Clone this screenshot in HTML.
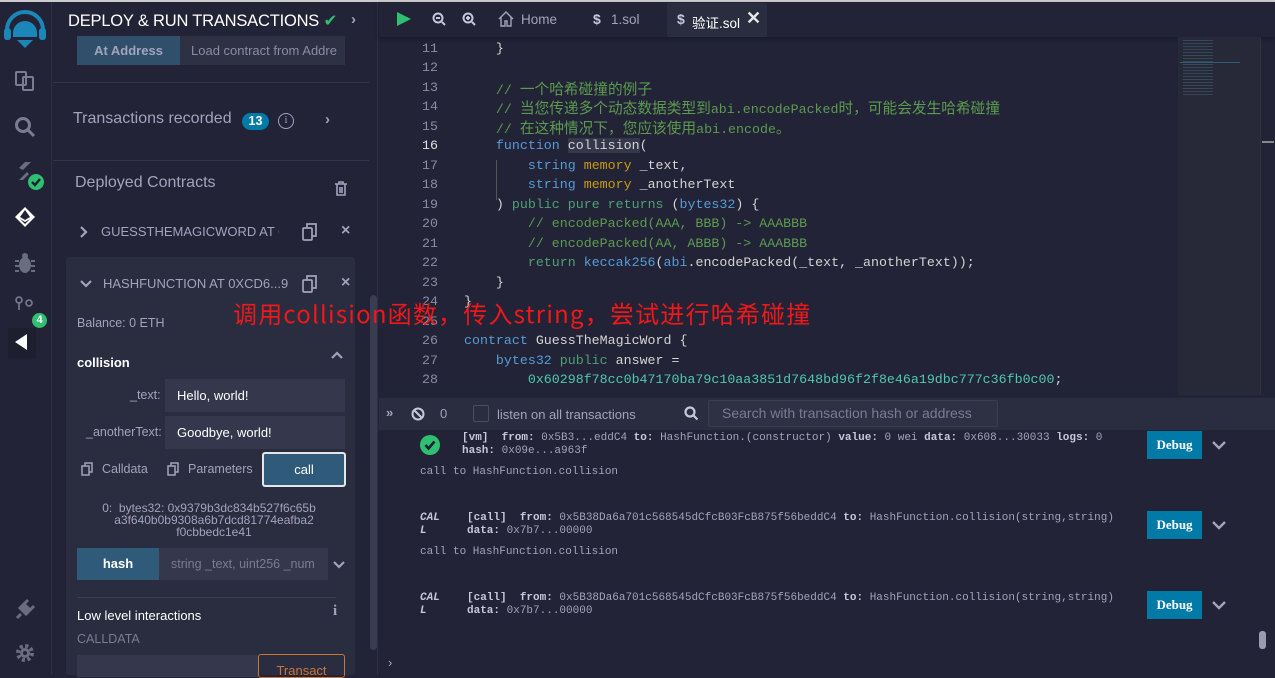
<!DOCTYPE html>
<html><head><meta charset="utf-8"><style>
*{box-sizing:border-box;margin:0;padding:0}
body{width:1275px;height:675px;overflow:hidden;background:#222336;font-family:"Liberation Sans","Noto Sans CJK SC",sans-serif;color:#a2a3bd;position:relative}
.a{position:absolute;white-space:nowrap}
.ln{position:absolute;left:380px;width:58px;text-align:right;font-family:"Liberation Mono",monospace;font-size:13.3px;color:#8a8ca3}
.cl{position:absolute;left:464px;font-family:"Liberation Mono","Noto Sans CJK SC",monospace;font-size:13.3px;color:#d4d4d4;white-space:pre}
.cj{font-size:14.7px;font-family:"Noto Sans CJK SC",sans-serif}
.cm{color:#5c9b4f}.kw{color:#569cd6}.mem{color:#c99a10}.gr{color:#4ea072}.nm{color:#4ec9b0}.ty{color:#569cd6}
.tl{font-family:"Liberation Mono","Noto Sans CJK SC",monospace;font-size:11px;color:#a2a3bd;position:absolute;white-space:nowrap}
.tl b{color:#c6c7da}
.dbg{position:absolute;left:1147px;width:55px;height:28px;background:#007aa6;color:#fff;font-family:"Liberation Serif",serif;font-weight:bold;font-size:13px;text-align:center;line-height:28px}
</style></head><body>
<div class="a" style="left:0;top:0;width:1275px;height:2px;background:#ccc"></div>
<div class="a" style="left:0;top:2px;width:52px;height:673px;background:#222336;border-right:1px solid #2d2f45"></div>
<svg class="a" style="left:3px;top:8px" width="44" height="42" viewBox="0 0 44 42"><path d="M4 22 a18 18 0 0 1 36 0" fill="none" stroke="#1a87b8" stroke-width="4"/><rect x="1" y="20" width="7" height="12" rx="3" fill="#1a87b8"/><rect x="36" y="20" width="7" height="12" rx="3" fill="#1a87b8"/><path d="M10 25 a12 12 0 0 1 24 0 v4 h-24z M14 32 h16 l-8 8z" fill="#1a87b8"/></svg>
<svg class="a" style="left:14px;top:70px" width="22" height="22" viewBox="0 0 22 22" fill="none" stroke="#7a7c92" stroke-width="2"><rect x="2" y="2" width="10" height="13" rx="1"/><rect x="9" y="7" width="10" height="13" rx="1"/></svg>
<svg class="a" style="left:14px;top:116px" width="22" height="22" viewBox="0 0 22 22" fill="none" stroke="#7a7c92" stroke-width="3"><circle cx="9" cy="9" r="6.5"/><path d="M14 14l6 6"/></svg>
<svg class="a" style="left:15px;top:160px" width="32" height="32" viewBox="0 0 32 32"><path d="M4 8 l6-6 h6 l-8 8z M14 14 l-6 6 h-4 l8-8z" fill="#6a6c80"/><circle cx="21" cy="22" r="8" fill="#2fbf71"/><path d="M17 22l3 3 5-6" stroke="#1e2033" stroke-width="2.4" fill="none"/></svg>
<svg class="a" style="left:13px;top:205px" width="24" height="24" viewBox="0 0 24 24"><path d="M2 12 L12 2 L22 12 L12 22Z" fill="#fff"/><path d="M12 5 L7 12 L12 15 L17 12Z M7 14 L12 19 L17 14 L12 17Z" fill="#222336"/></svg>
<svg class="a" style="left:15px;top:252px" width="20" height="22" viewBox="0 0 20 22" fill="#6a6c80"><ellipse cx="10" cy="13" rx="6" ry="8"/><path d="M0 9h4M0 14h4M0 19h4M16 9h4M16 14h4M16 19h4" stroke="#6a6c80" stroke-width="2"/><circle cx="10" cy="4" r="3"/></svg>
<svg class="a" style="left:15px;top:296px" width="20" height="14" viewBox="0 0 20 14" fill="none" stroke="#7a7c92" stroke-width="1.6"><circle cx="4" cy="4" r="3"/><circle cx="14" cy="7" r="3"/><path d="M4 7v7"/></svg>
<div class="a" style="left:32px;top:313px;width:15px;height:15px;border-radius:8px;background:#2fbf71;color:#fff;font-size:11px;font-weight:bold;text-align:center;line-height:15px">4</div>
<div class="a" style="left:8px;top:328px;width:28px;height:30px;background:#1d1e2e"></div>
<svg class="a" style="left:14px;top:333px" width="14" height="18"><path d="M13 1 L1 9 L13 17Z" fill="#fff"/></svg>
<svg class="a" style="left:14px;top:598px" width="22" height="22" viewBox="0 0 22 22"><path d="M3 20l4-4 M6 10l6 6 4-4-6-6z M11 5l3-3 M17 11l3-3" stroke="#6a6c80" stroke-width="3" fill="#6a6c80"/></svg>
<svg class="a" style="left:15px;top:643px" width="20" height="20" viewBox="0 0 20 20"><circle cx="10" cy="10" r="7" fill="none" stroke="#6a6c80" stroke-width="4" stroke-dasharray="3 2.5"/><circle cx="10" cy="10" r="5" fill="#6a6c80"/><circle cx="10" cy="10" r="2" fill="#222336"/></svg>

<div class="a" style="left:53px;top:2px;width:325px;height:673px;background:#222336;border-right:1px solid #2d2f45"></div>
<div class="a" style="left:68px;top:11px;font-size:16.5px;color:#fff;letter-spacing:-0.2px">DEPLOY &amp; RUN TRANSACTIONS <span style="color:#2fbf71">✔</span></div>
<div class="a" style="left:351px;top:11px;color:#a2a3bd;font-size:15px;font-weight:bold">›</div>
<div class="a" style="left:77px;top:36px;width:103px;height:29px;background:#2f4f6a;color:#a2a3bd;font-size:13px;font-weight:bold;text-align:center;line-height:29px">At Address</div>
<div class="a" style="left:180px;top:36px;width:165px;height:29px;background:#2e3044;color:#8a8ca3;font-size:13px;line-height:29px;padding-left:11px;overflow:hidden">Load contract from Addre</div>
<div class="a" style="left:53px;top:82px;width:316px;height:1px;background:#33354c"></div>
<div class="a" style="left:73px;top:110px;font-size:16px;color:#a2a3bd">Transactions recorded</div>
<div class="a" style="left:242px;top:113px;width:27px;height:17px;border-radius:9px;background:#007aa6;color:#fff;font-size:12.5px;font-weight:bold;text-align:center;line-height:17px">13</div>
<div class="a" style="left:278px;top:113px;width:16px;height:16px;border-radius:50%;border:1.5px solid #a2a3bd;font-size:11px;text-align:center;line-height:13px;font-family:'Liberation Serif',serif">i</div>
<div class="a" style="left:325px;top:111px;font-size:15px;font-weight:bold">›</div>
<div class="a" style="left:53px;top:160px;width:316px;height:1px;background:#33354c"></div>
<div class="a" style="left:75px;top:174px;font-size:16px;color:#a2a3bd">Deployed Contracts</div>
<svg class="a" style="left:334px;top:181px" width="14" height="15" viewBox="0 0 14 15" fill="none" stroke="#a2a3bd" stroke-width="1.6"><path d="M1 3h12M5 3V1h4v2M3 3v11h8V3M6 6v6M8 6v6"/></svg>
<svg class="a" style="left:80px;top:226px" width="8" height="12"><path d="M1 1l5 5-5 5" stroke="#a2a3bd" stroke-width="2.2" fill="none"/></svg>
<div class="a" style="left:101px;top:224px;font-size:13px;width:178px;overflow:hidden">GUESSTHEMAGICWORD AT 0X</div>
<svg class="a" style="left:302px;top:223px" width="16" height="18" viewBox="0 0 16 18" fill="none" stroke="#a2a3bd" stroke-width="1.7"><rect x="1" y="5" width="9" height="12" rx="1"/><path d="M5 5V1h9v12h-4"/></svg>
<div class="a" style="left:341px;top:222px;font-size:16px;font-weight:bold">×</div>
<div class="a" style="left:66px;top:257px;width:289px;height:418px;background:#2a2c3f;border-radius:3px"></div>
<svg class="a" style="left:80px;top:280px" width="12" height="8"><path d="M1 1l5 5 5-5" stroke="#a2a3bd" stroke-width="2.2" fill="none"/></svg>
<div class="a" style="left:103px;top:276px;font-size:13px">HASHFUNCTION AT 0XCD6...9</div>
<svg class="a" style="left:302px;top:275px" width="16" height="18" viewBox="0 0 16 18" fill="none" stroke="#a2a3bd" stroke-width="1.7"><rect x="1" y="5" width="9" height="12" rx="1"/><path d="M5 5V1h9v12h-4"/></svg>
<div class="a" style="left:341px;top:274px;font-size:16px;font-weight:bold">×</div>
<div class="a" style="left:370px;top:295px;width:7px;height:355px;border-radius:4px;background:#3a3c52"></div>
<div class="a" style="left:77px;top:316px;font-size:12.5px">Balance: 0 ETH</div>
<div class="a" style="left:77px;top:355px;font-size:13px;font-weight:bold;color:#fff">collision</div>
<svg class="a" style="left:331px;top:351px" width="12" height="8"><path d="M1 7l5-5 5 5" stroke="#a2a3bd" stroke-width="2.2" fill="none"/></svg>
<div class="a" style="left:130px;top:388px;font-size:12.5px">_text:</div>
<div class="a" style="left:165px;top:379px;width:180px;height:33px;background:#35374d;color:#fff;font-size:13px;line-height:33px;padding-left:12px">Hello, world!</div>
<div class="a" style="left:86px;top:425px;font-size:12.5px">_anotherText:</div>
<div class="a" style="left:165px;top:416px;width:180px;height:33px;background:#35374d;color:#fff;font-size:13px;line-height:33px;padding-left:12px">Goodbye, world!</div>
<svg class="a" style="left:81px;top:462px" width="12" height="14" viewBox="0 0 12 14" fill="none" stroke="#a2a3bd" stroke-width="1.5"><rect x="1" y="4" width="7" height="9"/><path d="M4 4V1h7v9H8"/></svg>
<div class="a" style="left:102px;top:462px;font-size:12.5px">Calldata</div>
<svg class="a" style="left:167px;top:462px" width="12" height="14" viewBox="0 0 12 14" fill="none" stroke="#a2a3bd" stroke-width="1.5"><rect x="1" y="4" width="7" height="9"/><path d="M4 4V1h7v9H8"/></svg>
<div class="a" style="left:188px;top:462px;font-size:12.5px">Parameters</div>
<div class="a" style="left:262px;top:452px;width:84px;height:35px;background:#2f5a7a;border:2px solid #e6e6e6;border-radius:3px;color:#fff;font-size:13px;text-align:center;line-height:31px">call</div>
<div class="a" style="left:89px;top:502px;font-size:12px;line-height:12px;text-align:center;width:240px;white-space:normal">0:&nbsp; bytes32: 0x9379b3dc834b527f6c65b<br>&nbsp;&nbsp;&nbsp;a3f640b0b9308a6b7dcd81774eafba2<br>&nbsp;&nbsp;&nbsp;f0cbbedc1e41</div>
<div class="a" style="left:77px;top:548px;width:82px;height:32px;background:#2f5a7a;color:#fff;font-size:13px;font-weight:bold;text-align:center;line-height:32px">hash</div>
<div class="a" style="left:159px;top:548px;width:169px;height:32px;background:#35374d;color:#7a7c92;font-size:12.5px;line-height:32px;padding-left:12px;overflow:hidden">string _text, uint256 _num</div>
<svg class="a" style="left:333px;top:561px" width="12" height="8"><path d="M1 1l5 5 5-5" stroke="#a2a3bd" stroke-width="2.2" fill="none"/></svg>
<div class="a" style="left:77px;top:597px;width:259px;height:1px;background:#3c3e55"></div>
<div class="a" style="left:77px;top:608px;font-size:13px;color:#fff">Low level interactions</div>
<div class="a" style="left:333px;top:603px;font-size:15px;font-weight:bold;font-family:'Liberation Serif',serif">i</div>
<div class="a" style="left:77px;top:632px;font-size:12.5px;color:#7a7c92">CALLDATA</div>
<div class="a" style="left:77px;top:655px;width:181px;height:22px;background:#35374d"></div>
<div class="a" style="left:258px;top:654px;width:87px;height:24px;border:1px solid #c97539;border-radius:3px;color:#c97539;font-size:13px;text-align:center;padding-top:8px">Transact</div>

<div class="a" style="left:379px;top:2px;width:896px;height:35px;background:#222336;box-shadow:0 2px 3px #1a1b28"></div>
<svg class="a" style="left:396px;top:11px" width="16" height="16"><path d="M1 1l14 7-14 7z" fill="#2fbf71"/></svg>
<svg class="a" style="left:432px;top:12px" width="14" height="14" fill="none" stroke="#c6c7da" stroke-width="2"><circle cx="6" cy="6" r="4.5"/><path d="M10 10l3 3M4 6h4"/></svg>
<svg class="a" style="left:462px;top:12px" width="14" height="14" fill="none" stroke="#c6c7da" stroke-width="2"><circle cx="6" cy="6" r="4.5"/><path d="M10 10l3 3M4 6h4M6 4v4"/></svg>
<svg class="a" style="left:498px;top:11px" width="16" height="16" fill="none" stroke="#a2a3bd" stroke-width="1.4"><path d="M1 8L8 1l7 7M3 6v9h4v-5h2v5h4V6"/></svg>
<div class="a" style="left:521px;top:12px;font-size:13.5px;color:#a2a3bd">Home</div>
<div class="a" style="left:593px;top:11px;font-size:14px;color:#c6c7da;font-weight:bold">$</div>
<div class="a" style="left:611px;top:12px;font-size:13.5px;color:#a2a3bd">1.sol</div>
<div class="a" style="left:667px;top:3px;width:100px;height:34px;background:#2a2c3f"></div>
<div class="a" style="left:677px;top:11px;font-size:14px;color:#c6c7da;font-weight:bold">$</div>
<div class="a" style="left:692px;top:12px;font-size:13.5px;color:#fff">验证.sol</div>
<div class="a" style="left:746px;top:8px;font-size:18px;color:#e6e6e6;font-weight:bold">✕</div>

<div class="a" style="left:1178px;top:37px;width:82px;height:358px;background:#272939"></div>
<div class="a" style="left:1260px;top:37px;width:1px;height:358px;background:#333"></div>
<div class="a" style="left:1262px;top:141px;width:12px;height:2px;background:#888"></div>
<div class="a" style="left:1180px;top:62px;width:60px;height:1px;background:#2f5a7a"></div>
<div class="a" style="left:1183px;top:40px;width:30px;height:55px;background:repeating-linear-gradient(#3b5f6a 0 1px,transparent 1px 3px);opacity:.6"></div>

<div class="ln" style="top:41px">11</div><div class="cl" style="top:41px">    }</div>
<div class="ln" style="top:60px">12</div>
<div class="ln" style="top:80px">13</div><div class="cl cm" style="top:78px">    // <span class="cj">一个哈希碰撞的例子</span></div>
<div class="ln" style="top:99px">14</div><div class="cl cm" style="top:97px">    // <span class="cj">当您传递多个动态数据类型到</span>abi.encodePacked<span class="cj">时，可能会发生哈希碰撞</span></div>
<div class="ln" style="top:119px">15</div><div class="cl cm" style="top:117px">    // <span class="cj">在这种情况下，您应该使用</span>abi.encode<span class="cj">。</span></div>
<div class="ln" style="top:138px;color:#e0e0e0">16</div><div class="cl" style="top:138px">    <span class="kw">function</span> <span style="background:#35374a">collision</span>(</div>
<div class="ln" style="top:158px">17</div><div class="cl" style="top:158px">        <span class="ty">string</span> <span class="mem">memory</span> _text,</div>
<div class="ln" style="top:177px">18</div><div class="cl" style="top:177px">        <span class="ty">string</span> <span class="mem">memory</span> _anotherText</div>
<div class="ln" style="top:197px">19</div><div class="cl" style="top:197px">    ) <span class="gr">public</span> <span class="gr">pure</span> <span class="gr">returns</span> (<span class="ty">bytes32</span>) {</div>
<div class="ln" style="top:216px">20</div><div class="cl cm" style="top:216px">        // encodePacked(AAA, BBB) -&gt; AAABBB</div>
<div class="ln" style="top:236px">21</div><div class="cl cm" style="top:236px">        // encodePacked(AA, ABBB) -&gt; AAABBB</div>
<div class="ln" style="top:255px">22</div><div class="cl" style="top:255px">        <span class="gr">return</span> <span class="ty">keccak256</span>(<span class="ty">abi</span>.encodePacked(_text, _anotherText));</div>
<div class="ln" style="top:275px">23</div><div class="cl" style="top:275px">    }</div>
<div class="ln" style="top:294px">24</div><div class="cl" style="top:294px">}</div>
<div class="ln" style="top:314px">25</div>
<div class="ln" style="top:333px">26</div><div class="cl" style="top:333px"><span class="kw">contract</span> GuessTheMagicWord {</div>
<div class="ln" style="top:353px">27</div><div class="cl" style="top:353px">    <span class="ty">bytes32</span> <span class="gr">public</span> answer =</div>
<div class="ln" style="top:372px">28</div><div class="cl" style="top:372px">        <span class="nm">0x60298f78cc0b47170ba79c10aa3851d7648bd96f2f8e46a19dbc777c36fb0c00</span>;</div>
<div class="a" style="left:496px;top:160px;width:1px;height:40px;background:#555"></div>
<div class="a" style="left:233px;top:295px;font-size:24px;letter-spacing:1.2px;color:#f01818;font-family:'Noto Sans CJK SC',sans-serif">调用collision函数，传入string，尝试进行哈希碰撞</div>

<div class="a" style="left:379px;top:398px;width:896px;height:32px;background:#2a2c3f"></div>
<div class="a" style="left:386px;top:405px;font-size:13px;color:#a2a3bd;font-weight:bold">»</div>
<svg class="a" style="left:411px;top:407px" width="14" height="14" fill="none" stroke="#c6c7da" stroke-width="2"><circle cx="7" cy="7" r="5.5"/><path d="M3 3l8 8"/></svg>
<div class="a" style="left:440px;top:406px;font-size:13px">0</div>
<div class="a" style="left:473px;top:405px;width:16px;height:17px;border:1px solid #4a4c62;border-radius:2px"></div>
<div class="a" style="left:497px;top:407px;font-size:13px">listen on all transactions</div>
<svg class="a" style="left:684px;top:406px" width="14" height="15" fill="none" stroke="#c6c7da" stroke-width="2.2"><circle cx="6" cy="6" r="4.5"/><path d="M9.5 9.5l4 4"/></svg>
<div class="a" style="left:708px;top:400px;width:290px;height:27px;background:#2e3044;border:1px solid #3a3c52;border-radius:2px;color:#7a7c92;font-size:14px;line-height:25px;padding-left:13px">Search with transaction hash or address</div>

<svg class="a" style="left:420px;top:435px" width="20" height="20"><circle cx="10" cy="10" r="10" fill="#2fbf71"/><path d="M5.5 10l3 3.5 6-7" stroke="#1e2033" stroke-width="2.6" fill="none"/></svg>
<div class="tl" style="left:462px;top:432px"><b>[vm]</b>&nbsp; <b>from:</b> 0x5B3...eddC4 <b>to:</b> HashFunction.(constructor) <b>value:</b> 0 wei <b>data:</b> 0x608...30033 <b>logs:</b> 0</div>
<div class="tl" style="left:462px;top:445px"><b>hash:</b> 0x09e...a963f</div>
<div class="tl" style="left:420px;top:466px">call to HashFunction.collision</div>
<div class="dbg" style="top:431px">Debug</div>
<svg class="a" style="left:1212px;top:441px" width="14" height="9"><path d="M1 1l6 6 6-6" stroke="#a2a3bd" stroke-width="2.4" fill="none"/></svg>

<div class="tl" style="left:420px;top:512px;font-style:italic"><b>CAL</b></div>
<div class="tl" style="left:420px;top:525px;font-style:italic"><b>L</b></div>
<div class="tl" style="left:467px;top:512px"><b>[call]</b>&nbsp; <b>from:</b> 0x5B38Da6a701c568545dCfcB03FcB875f56beddC4 <b>to:</b> HashFunction.collision(string,string)</div>
<div class="tl" style="left:467px;top:525px"><b>data:</b> 0x7b7...00000</div>
<div class="tl" style="left:420px;top:546px">call to HashFunction.collision</div>
<div class="dbg" style="top:511px">Debug</div>
<svg class="a" style="left:1212px;top:521px" width="14" height="9"><path d="M1 1l6 6 6-6" stroke="#a2a3bd" stroke-width="2.4" fill="none"/></svg>

<div class="tl" style="left:420px;top:592px;font-style:italic"><b>CAL</b></div>
<div class="tl" style="left:420px;top:605px;font-style:italic"><b>L</b></div>
<div class="tl" style="left:467px;top:592px"><b>[call]</b>&nbsp; <b>from:</b> 0x5B38Da6a701c568545dCfcB03FcB875f56beddC4 <b>to:</b> HashFunction.collision(string,string)</div>
<div class="tl" style="left:467px;top:605px"><b>data:</b> 0x7b7...00000</div>
<div class="dbg" style="top:591px">Debug</div>
<svg class="a" style="left:1212px;top:601px" width="14" height="9"><path d="M1 1l6 6 6-6" stroke="#a2a3bd" stroke-width="2.4" fill="none"/></svg>
<div class="a" style="left:1259px;top:631px;width:7px;height:18px;border-radius:3px;background:#9a9bb0"></div>
<div class="a" style="left:388px;top:655px;font-size:13px;color:#a2a3bd">›</div>
</body></html>
